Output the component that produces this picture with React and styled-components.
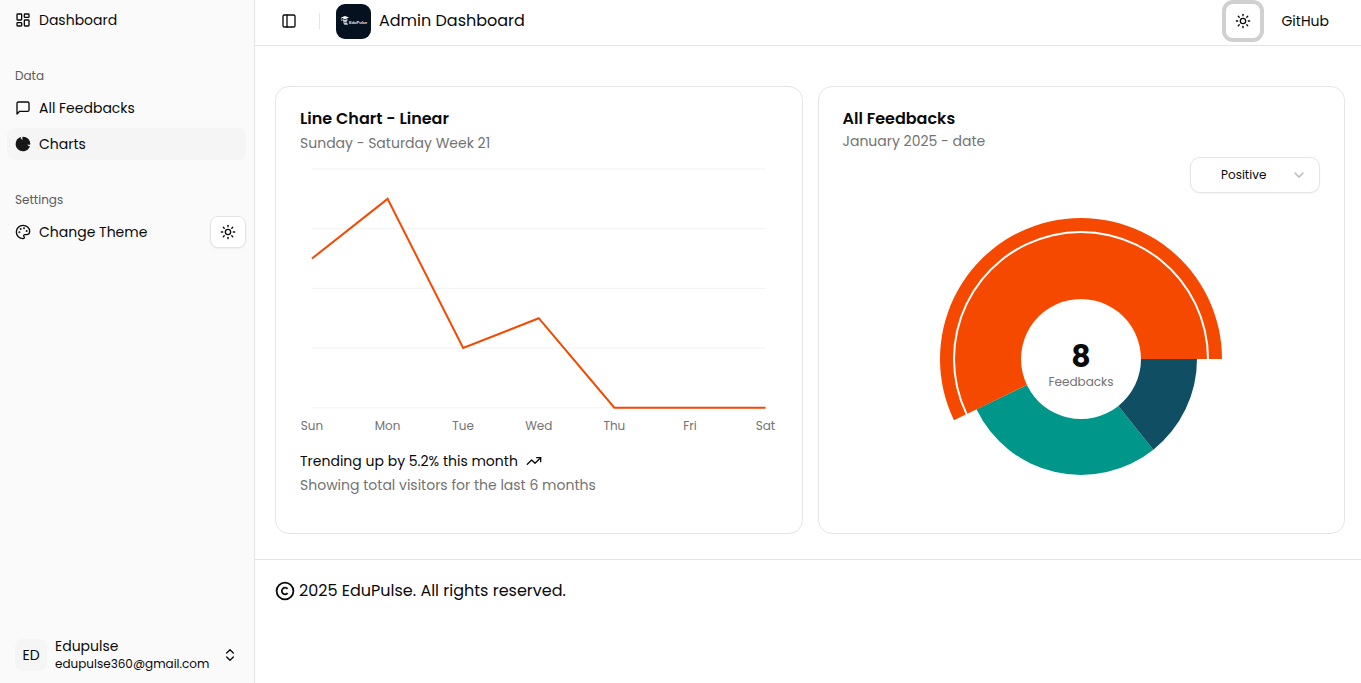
import React from 'react';
import styled, { createGlobalStyle } from 'styled-components';
import {
  LayoutDashboard,
  Palette,
  Sun,
  PanelLeft,
  TrendingUp,
  ChevronsUpDown,
  ChevronDown,
} from 'lucide-react';

const GlobalStyle = createGlobalStyle`
  *, *::before, *::after { box-sizing: border-box; }
  body {
    margin: 0;
    background: #fff;
    color: #0a0a0a;
    font-family: Poppins, Inter, "Open Sans", sans-serif;
    font-size: 14px;
    line-height: 20px;
  }
  button, select { font: inherit; color: inherit; }
  h1, h2, p { margin: 0; }
  a { color: inherit; text-decoration: none; }
  svg { display: block; flex-shrink: 0; }
`;

const Page = styled.div`
  display: flex;
  min-height: 100vh;
`;

const Sidebar = styled.aside`
  position: sticky;
  top: 0;
  flex: 0 0 255px;
  display: flex;
  flex-direction: column;
  justify-content: space-between;
  height: 100vh;
  padding: 4px 8px 4px 7px;
  background: #fafafa;
  border-right: 1px solid #e5e5e5;
`;

const Nav = styled.nav`
  display: flex;
  flex-direction: column;
  gap: 24px;
`;

const NavGroup = styled.div`
  display: flex;
  flex-direction: column;
`;

const GroupLabel = styled.div`
  display: flex;
  align-items: center;
  height: 32px;
  padding: 0 8px;
  font-size: 12px;
  color: #5c5c5c;
`;

const NavList = styled.div`
  display: flex;
  flex-direction: column;
  gap: 4px;
`;

const NavItem = styled.a`
  display: flex;
  flex-grow: 1;
  align-items: center;
  gap: 8px;
  height: 32px;
  padding: 0 8px;
  border-radius: 8px;
  background: ${(p) => (p.$active ? '#f5f5f5' : 'transparent')};
`;

const ThemeRow = styled.div`
  display: flex;
  align-items: center;
`;

const IconButton = styled.button`
  display: flex;
  align-items: center;
  justify-content: center;
  width: 36px;
  height: ${(p) => (p.$focused ? '36px' : '32px')};
  padding: 0;
  background: #fff;
  border: 1px solid ${(p) => (p.$focused ? '#d0d0d0' : '#e5e5e5')};
  border-radius: 8px;
  box-shadow: ${(p) => (p.$focused ? '0 0 0 3px #d0d0d0' : '0 1px 2px rgba(0, 0, 0, 0.05)')};
`;

const GhostButton = styled.button`
  display: flex;
  align-items: center;
  justify-content: center;
  width: 28px;
  height: 28px;
  padding: 0;
  background: none;
  border: 0;
`;

const UserButton = styled.button`
  display: flex;
  align-items: center;
  gap: 8px;
  height: 48px;
  padding: 0 8px;
  background: none;
  border: 0;
  text-align: left;
`;

const Avatar = styled.span`
  display: flex;
  align-items: center;
  justify-content: center;
  width: 32px;
  height: 32px;
  border-radius: 8px;
  background: #f5f5f5;
`;

const UserText = styled.span`
  display: flex;
  flex: 1;
  flex-direction: column;
`;

const UserName = styled.span`
  line-height: 18px;
`;

const UserMail = styled.span`
  font-size: 12px;
  line-height: 18px;
`;

const Content = styled.div`
  display: flex;
  flex: 1;
  flex-direction: column;
  min-width: 0;
`;

const Header = styled.header`
  display: flex;
  align-items: center;
  height: 46px;
  padding: 0 32px 3px 20px;
  border-bottom: 1px solid #e5e5e5;
`;

const Separator = styled.span`
  width: 1px;
  height: 16px;
  margin: 0 16px;
  background: #e5e5e5;
`;

const Title = styled.h1`
  flex: 1;
  padding-left: 8px;
  font-size: 16px;
  font-weight: 400;
  line-height: 24px;
`;

const HeaderLink = styled.a`
  margin-left: 20px;
`;

const Main = styled.main`
  display: grid;
  grid-template-columns: repeat(2, minmax(0, 1fr));
  gap: 15px;
  padding: 40px 16px 25px 20px;
`;

const Card = styled.section`
  display: flex;
  flex-direction: column;
  padding: 20px 24px 29px;
  border: 1px solid #e5e5e5;
  border-radius: 14px;
`;

const CardTitle = styled.h2`
  font-size: 16px;
  font-weight: 600;
  line-height: 24px;
`;

const Muted = styled.p`
  color: #737373;
  line-height: ${(p) => (p.$loose ? '24px' : '20px')};
`;

const LineFigure = styled.svg`
  width: 100%;
  height: auto;
  margin-top: 14px;
  overflow: visible;
`;

const AxisText = styled.text`
  font-size: 12px;
  fill: #737373;
  text-anchor: middle;
`;

const CardFooter = styled.div`
  margin-top: 11px;
`;

const Trend = styled.p`
  display: flex;
  align-items: center;
  gap: 8px;
  line-height: 24px;
`;

const SelectWrap = styled.div`
  position: relative;
  align-self: flex-end;
  width: 130px;
  height: 36px;
  margin-top: 6px;
`;

const Select = styled.select`
  width: 100%;
  height: 100%;
  padding: 0 30px;
  appearance: none;
  background: #fff;
  border: 1px solid #e5e5e5;
  border-radius: 10px;
  box-shadow: 0 1px 2px rgba(0, 0, 0, 0.05);
  font-size: 12px;
`;

const SelectArrow = styled(ChevronDown)`
  position: absolute;
  top: 10px;
  right: 13px;
  color: #b5b5b5;
  pointer-events: none;
`;

const PieFigure = styled.svg`
  align-self: center;
  width: 290px;
  height: 290px;
  margin-top: 21px;
`;

const PieTotal = styled.text`
  font-size: 30px;
  font-weight: 700;
  fill: #0a0a0a;
  text-anchor: middle;
`;

const Footer = styled.footer`
  display: flex;
  align-items: center;
  gap: 4px;
  padding: 19px 20px;
  border-top: 1px solid #e5e5e5;
  font-size: 16px;
  line-height: 24px;
`;

const DAYS = [
  { day: 'Sun', value: 5 },
  { day: 'Mon', value: 7 },
  { day: 'Tue', value: 2 },
  { day: 'Wed', value: 3 },
  { day: 'Thu', value: 0 },
  { day: 'Fri', value: 0 },
  { day: 'Sat', value: 0 },
];

function LineChart() {
  const x = (i) => 12 + (i * 454) / 6;
  const y = (v) => 239 - (v * 239) / 8;
  return (
    <LineFigure viewBox="0 0 478 269" role="img" aria-label="Feedbacks per day">
      {[0, 2, 4, 6, 8].map((v) => (
        <line key={v} x1="12" x2="466" y1={y(v)} y2={y(v)} stroke="#f2f2f2" />
      ))}
      <polyline
        points={DAYS.map((d, i) => `${x(i)},${y(d.value)}`).join(' ')}
        fill="none"
        stroke="#f54900"
        strokeWidth="2"
      />
      {DAYS.map((d, i) => (
        <AxisText key={d.day} x={x(i)} y="261">
          {d.day}
        </AxisText>
      ))}
    </LineFigure>
  );
}

function sector(inner, outer, from, to) {
  const point = (r, turn) => {
    const a = turn * 2 * Math.PI;
    return `${145 + r * Math.cos(a)} ${145 - r * Math.sin(a)}`;
  };
  const large = to - from > 0.5 ? 1 : 0;
  return `M${point(outer, from)}A${outer} ${outer} 0 ${large} 0 ${point(outer, to)}L${point(inner, to)}A${inner} ${inner} 0 ${large} 1 ${point(inner, from)}Z`;
}

function PieChart() {
  return (
    <PieFigure viewBox="0 0 290 290" role="img" aria-label="Feedback share">
      <path d={sector(60, 116, 4 / 7, 6 / 7)} fill="#009689" />
      <path d={sector(60, 116, 6 / 7, 1)} fill="#104e64" />
      <path d={sector(60, 126, 0, 4 / 7)} fill="#f54900" />
      <path d={sector(128, 141, 0, 4 / 7)} fill="#f54900" />
      <PieTotal x="145" y="153">8</PieTotal>
      <AxisText x="145" y="172">Feedbacks</AxisText>
    </PieFigure>
  );
}

function MessageIcon() {
  return (
    <svg width="16" height="16" viewBox="0 0 24 24" fill="none" stroke="currentColor" strokeWidth="2" strokeLinejoin="round" strokeLinecap="round">
      <path d="M21 15a2 2 0 0 1-2 2H7l-4 4V5a2 2 0 0 1 2-2h14a2 2 0 0 1 2 2z" />
    </svg>
  );
}

function PieIcon() {
  return (
    <svg width="16" height="16" viewBox="0 0 24 24" fill="#171717" stroke="#171717" strokeWidth="2" strokeLinejoin="round" strokeLinecap="round">
      <path d="M21.21 15.89A10 10 0 1 1 8 2.83" />
      <path d="M22 12A10 10 0 0 0 12 2v10z" />
    </svg>
  );
}

function CopyrightIcon() {
  return (
    <svg width="20" height="20" viewBox="0 0 20 20" fill="none" stroke="currentColor" strokeWidth="1.8">
      <circle cx="10" cy="10" r="8.4" />
      <path d="M12.600 7.800A3.300 3.300 0 1 0 12.600 12.200" />
    </svg>
  );
}

function Logo() {
  return (
    <svg width="35" height="35" viewBox="0 0 35 35" role="img" aria-label="EduPulse">
      <rect width="35" height="35" rx="9" fill="#06111f" />
      <path d="M5 13.600l4-1.600 4 1.400-4 1.800z" fill="#fff" />
      <path d="M6.600 15v2c1 1.400 3.700 1.400 4.800 0v-2l-2.400 1zM7 18.600h4l1 2.200H8.500z" fill="#c9ced6" />
      <path d="M5.400 14v3" stroke="#fff" strokeWidth=".5" />
      <text x="13" y="20" fontFamily="Liberation Sans, sans-serif" fontSize="4" fontWeight="700" fill="#e8ebf0">EduPulse</text>
    </svg>
  );
}

export default function App() {
  return (
    <>
      <GlobalStyle />
      <Page>
        <Sidebar>
          <Nav>
            <NavList>
              <NavItem href="#dashboard"><LayoutDashboard size={16} />Dashboard</NavItem>
            </NavList>
            <NavGroup>
              <GroupLabel>Data</GroupLabel>
              <NavList>
                <NavItem href="#feedbacks"><MessageIcon />All Feedbacks</NavItem>
                <NavItem href="#charts" $active><PieIcon />Charts</NavItem>
              </NavList>
            </NavGroup>
            <NavGroup>
              <GroupLabel>Settings</GroupLabel>
              <ThemeRow>
                <NavItem href="#theme"><Palette size={16} />Change Theme</NavItem>
                <IconButton aria-label="Toggle theme"><Sun size={16} /></IconButton>
              </ThemeRow>
            </NavGroup>
          </Nav>
          <UserButton>
            <Avatar>ED</Avatar>
            <UserText>
              <UserName>Edupulse</UserName>
              <UserMail>edupulse360@gmail.com</UserMail>
            </UserText>
            <ChevronsUpDown size={16} />
          </UserButton>
        </Sidebar>
        <Content>
          <Header>
            <GhostButton aria-label="Toggle sidebar"><PanelLeft size={16} /></GhostButton>
            <Separator />
            <Logo />
            <Title>Admin Dashboard</Title>
            <IconButton $focused aria-label="Toggle theme"><Sun size={16} /></IconButton>
            <HeaderLink href="#github">GitHub</HeaderLink>
          </Header>
          <Main>
            <Card>
              <CardTitle>Line Chart - Linear</CardTitle>
              <Muted $loose>Sunday - Saturday Week 21</Muted>
              <LineChart />
              <CardFooter>
                <Trend>Trending up by 5.2% this month <TrendingUp size={16} /></Trend>
                <Muted $loose>Showing total visitors for the last 6 months</Muted>
              </CardFooter>
            </Card>
            <Card>
              <CardTitle>All Feedbacks</CardTitle>
              <Muted>January 2025 - date</Muted>
              <SelectWrap>
                <Select aria-label="Feedback type" defaultValue="Positive">
                  <option>Positive</option>
                  <option>Neutral</option>
                  <option>Negative</option>
                </Select>
                <SelectArrow size={16} />
              </SelectWrap>
              <PieChart />
            </Card>
          </Main>
          <Footer>
            <CopyrightIcon />
            <p>2025 EduPulse. All rights reserved.</p>
          </Footer>
        </Content>
      </Page>
    </>
  );
}
